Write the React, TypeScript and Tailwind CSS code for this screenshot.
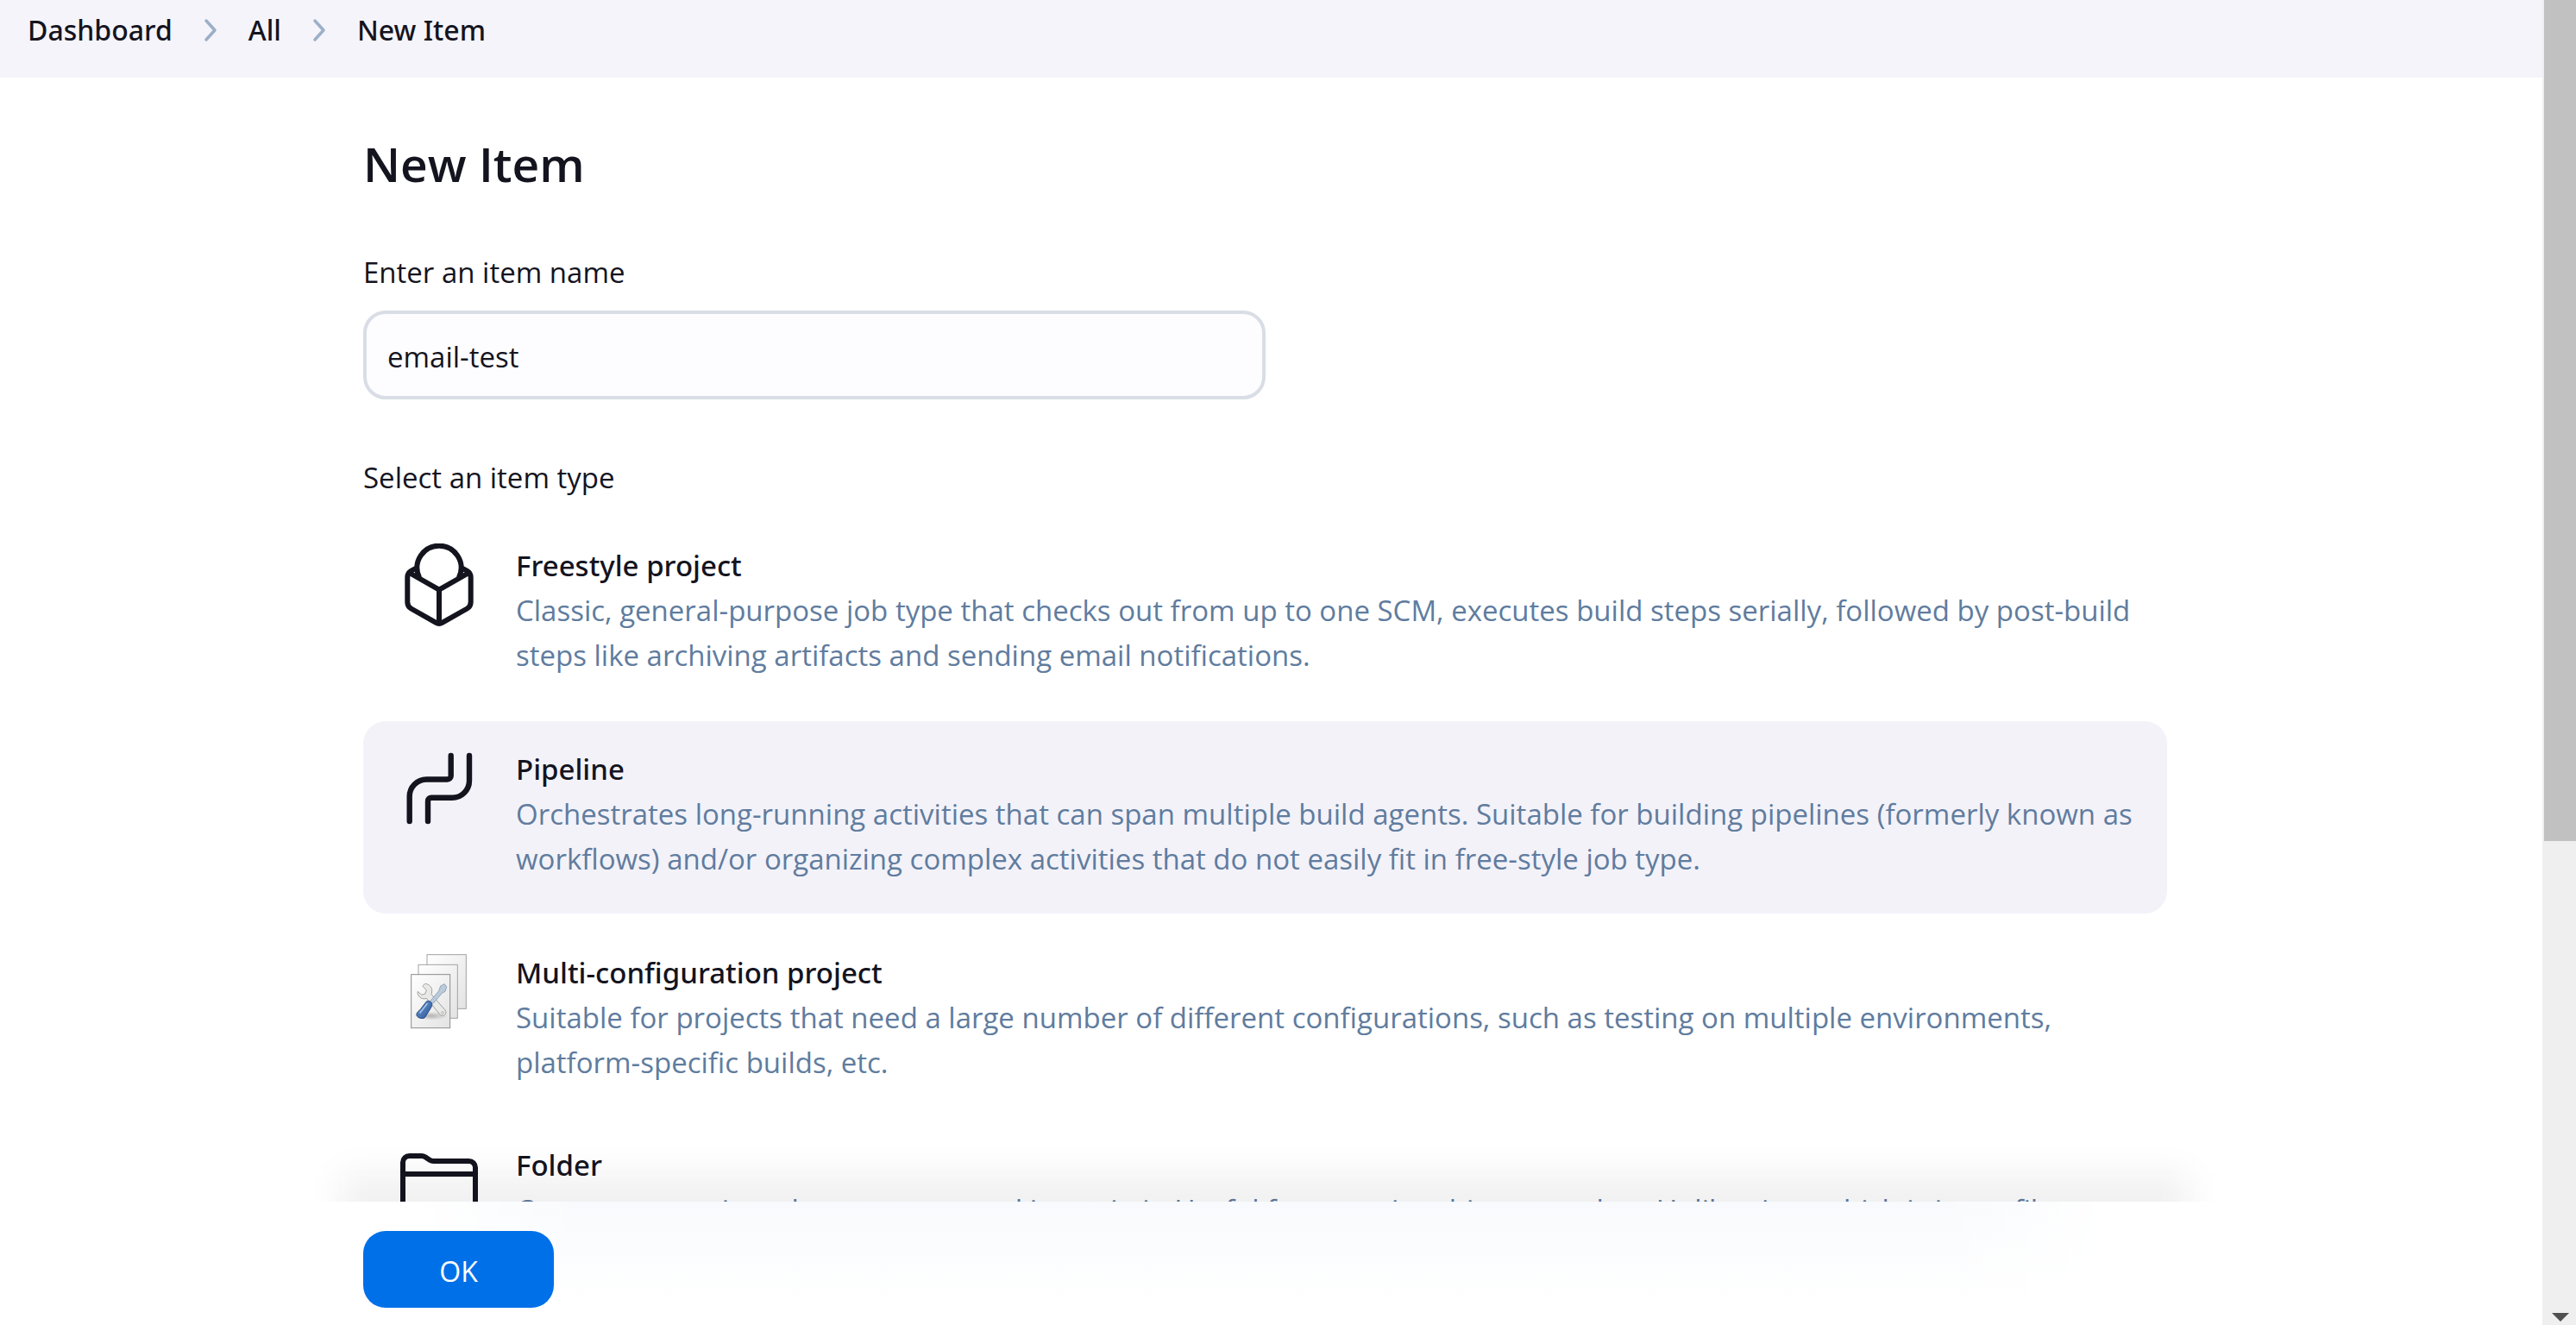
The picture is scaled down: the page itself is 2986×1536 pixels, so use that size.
import React, { Fragment, useState } from "react";
import type { ReactNode } from "react";

type ItemType = {
  id: string;
  title: string;
  description: string;
  icon: ReactNode;
};

function FreestyleIcon() {
  return (
    <svg viewBox="0 0 96 96" className="size-24" fill="none" stroke="currentColor" strokeWidth="6" strokeLinecap="round" strokeLinejoin="round" aria-hidden="true">
      <path d="M21.5 28.5l-6 3.4Q11.3 34.5 11.3 39V68Q11.3 73 15.5 75.5L44 91.7Q48 94 52 91.7L80.5 75.5Q84.7 73 84.7 68V39Q84.7 34.5 80.5 31.9L74.5 28.5" />
      <path d="M13.5 34L48 53.7L82.5 34M48 53.7V92" />
      <path d="M24.6 38.3A25.5 25.5 0 1 1 71.4 38.3" />
    </svg>
  );
}

function PipelineIcon() {
  return (
    <svg viewBox="0 0 96 96" className="size-24" fill="none" stroke="currentColor" strokeWidth="6.4" strokeLinecap="round" strokeLinejoin="round" aria-hidden="true">
      <path d="M61.7 10V33.5a4 4 0 0 1-4 4H33.5A19.8 19.8 0 0 0 13.7 57.3V86" />
      <path d="M83 10V38.9A19.8 19.8 0 0 1 63.2 58.7H39a4 4 0 0 0-4 4V86" />
    </svg>
  );
}

function FolderIcon() {
  return (
    <svg viewBox="0 0 512 512" className="size-24" fill="none" stroke="currentColor" strokeWidth="32" strokeLinecap="round" strokeLinejoin="round" aria-hidden="true">
      <path d="M440 432H72a40 40 0 01-40-40V120a40 40 0 0140-40h75.89a40 40 0 0122.19 6.72l27.84 18.56a40 40 0 0022.19 6.72H440a40 40 0 0140 40v240a40 40 0 01-40 40zM32 192h448" />
    </svg>
  );
}

function MatrixIcon() {
  return (
    <svg viewBox="63 63 288 288" className="size-24" fill="none" aria-hidden="true">
      <defs>
        <linearGradient id="page" x1="0" y1="0" x2="1" y2="1">
          <stop offset="0" stopColor="#ffffff" />
          <stop offset="1" stopColor="#e3e3e3" />
        </linearGradient>
        <linearGradient id="handle" x1="0" y1="0" x2="1" y2="1">
          <stop offset="0" stopColor="#6f9bd4" />
          <stop offset="1" stopColor="#2a5599" />
        </linearGradient>
        <radialGradient id="shade">
          <stop offset="0" stopColor="#9a9a9a" stopOpacity="0.7" />
          <stop offset="1" stopColor="#9a9a9a" stopOpacity="0" />
        </radialGradient>
      </defs>
      <g fill="url(#page)" stroke="#a3a3a3" strokeWidth="3">
        <rect x="165" y="77" width="136" height="188" />
        <rect x="135" y="112" width="136" height="186" />
        <rect x="110" y="146" width="135" height="186" stroke="#8c8c8c" />
      </g>
      <ellipse cx="178" cy="290" rx="60" ry="15" fill="url(#shade)" />
      <path
        d="M160 178C172 180 183 190 182 204C182 209 180 212 180 215L228 270C234 279 229 288 221 289C215 290 211 287 208 283L163 229C150 234 136 226 133 214C132 210 132 207 133 205L146 217L158 214L163 201L150 187C152 182 156 179 160 178Z"
        fill="#e9eae7"
        stroke="#8f918d"
        strokeWidth="2.5"
        strokeLinejoin="round"
      />
      <circle cx="219" cy="279" r="4" fill="#ffffff" stroke="#8f918d" strokeWidth="2" />
      <path d="M212 186L226 179L233 189L228 205L217 211L186 247L176 239L206 203Z" fill="#b9cbdd" stroke="#8798aa" strokeWidth="2.5" strokeLinejoin="round" />
      <path
        d="M163 240C171 234 184 243 182 254L177 264L158 295C151 303 126 297 129 283C131 276 138 272 143 266Z"
        fill="url(#handle)"
        stroke="#1f4580"
        strokeWidth="3"
        strokeLinejoin="round"
      />
      <path d="M165 248L141 279" stroke="#a8c5ea" strokeWidth="5" strokeLinecap="round" />
    </svg>
  );
}

const groups: ItemType[][] = [
  [
    {
      id: "freestyle",
      title: "Freestyle project",
      description:
        "Classic, general-purpose job type that checks out from up to one SCM, executes build steps serially, followed by post-build steps like archiving artifacts and sending email notifications.",
      icon: <FreestyleIcon />,
    },
    {
      id: "pipeline",
      title: "Pipeline",
      description:
        "Orchestrates long-running activities that can span multiple build agents. Suitable for building pipelines (formerly known as workflows) and/or organizing complex activities that do not easily fit in free-style job type.",
      icon: <PipelineIcon />,
    },
    {
      id: "matrix",
      title: "Multi-configuration project",
      description:
        "Suitable for projects that need a large number of different configurations, such as testing on multiple environments, platform-specific builds, etc.",
      icon: <MatrixIcon />,
    },
  ],
  [
    {
      id: "folder",
      title: "Folder",
      description:
        "Creates a container that stores nested items in it. Useful for grouping things together. Unlike view, which is just a filter, a folder creates a separate namespace.",
      icon: <FolderIcon />,
    },
  ],
];

const crumbs = ["Dashboard", "All", "New Item"];

function Breadcrumbs() {
  return (
    <nav aria-label="Breadcrumb" className="h-[90px] shrink-0 bg-[#f5f4fa] px-8 pb-5">
      <ol className="flex h-full items-center gap-9 font-['Noto_Sans',sans-serif] text-[32px] leading-[52px] font-medium">
        {crumbs.map((crumb, i) => (
          <Fragment key={crumb}>
            {i > 0 && (
              <li aria-hidden="true">
                <svg viewBox="0 0 16 28" className="h-7 w-4" fill="none" stroke="#9bafc8" strokeWidth="3.5" strokeLinecap="round" strokeLinejoin="round">
                  <path d="M3 3L13 14L3 25" />
                </svg>
              </li>
            )}
            <li>
              <a href="#">{crumb}</a>
            </li>
          </Fragment>
        ))}
      </ol>
    </nav>
  );
}

function ItemCard({ item, checked, onSelect }: { item: ItemType; checked: boolean; onSelect: () => void }) {
  return (
    <li>
      <label className="relative flex cursor-pointer gap-[41px] rounded-[26px] pt-[30px] pr-8 pb-[37px] pl-10 has-checked:bg-[#f3f2f9]">
        <input type="radio" name="item-type" value={item.id} checked={checked} onChange={onSelect} className="sr-only" />
        <span className="shrink-0">{item.icon}</span>
        <span className="leading-[52px]">
          <span className="block font-['Noto_Sans',sans-serif] font-medium">{item.title}</span>
          <span className="block text-[#607c9e]">{item.description}</span>
        </span>
      </label>
    </li>
  );
}

export default function App() {
  const [name, setName] = useState("email-test");
  const [selected, setSelected] = useState("pipeline");

  return (
    <div className="flex h-screen overflow-hidden bg-white font-['Open_Sans','Noto_Sans',sans-serif] text-[33px] text-[#14141f]">
      <form className="flex min-w-0 flex-1 flex-col" onSubmit={(e) => e.preventDefault()}>
        <Breadcrumbs />

        <main className="relative min-h-0 flex-1 overflow-hidden pt-16 pr-[435px] pl-[421px]">
          <h1 className="text-[55px] leading-[72px] font-semibold">New Item</h1>

          <label htmlFor="name" className="mt-16 block leading-[52px]">
            Enter an item name
          </label>
          <input
            id="name"
            type="text"
            value={name}
            onChange={(e) => setName(e.target.value)}
            className="mt-[18px] block h-[103px] w-1/2 rounded-[26px] border-4 border-[#d9dde5] bg-[#fdfdff] px-6 pt-1 outline-none"
          />

          <fieldset className="mt-[65px]">
            <legend className="leading-[52px]">Select an item type</legend>
            <div className="mt-5">
              {groups.map((items) => (
                <ul key={items[0].id} className="flex flex-col gap-[13px]">
                  {items.map((item) => (
                    <ItemCard key={item.id} item={item} checked={selected === item.id} onSelect={() => setSelected(item.id)} />
                  ))}
                </ul>
              ))}
            </div>
          </fieldset>

          <div className="pointer-events-none absolute right-[410px] -bottom-20 left-[396px] h-[112px] bg-[#14141f]/6 blur-[18px]" />
        </main>

        <footer className="relative flex h-[143px] shrink-0 items-start pt-[34px] pl-[421px]">
          <div className="absolute inset-y-0 right-[500px] left-[480px] bg-linear-to-b from-[#f8fafd] to-white to-80% mask-x-from-90%" />
          <button type="submit" className="relative h-[89px] w-[221px] rounded-[26px] bg-[#0070e8] pt-1 text-[32px] text-white">
            OK
          </button>
        </footer>
      </form>

      <div aria-hidden="true" className="flex w-[39px] shrink-0 flex-col justify-between bg-[#efefef] pl-[2px]">
        <div className="h-[63.5%] bg-[#c1c1c1]" />
        <svg viewBox="0 0 20 10" className="mb-1 h-[10px] w-5 self-center" fill="#505050">
          <path d="M0 0H20L10 10Z" />
        </svg>
      </div>
    </div>
  );
}
